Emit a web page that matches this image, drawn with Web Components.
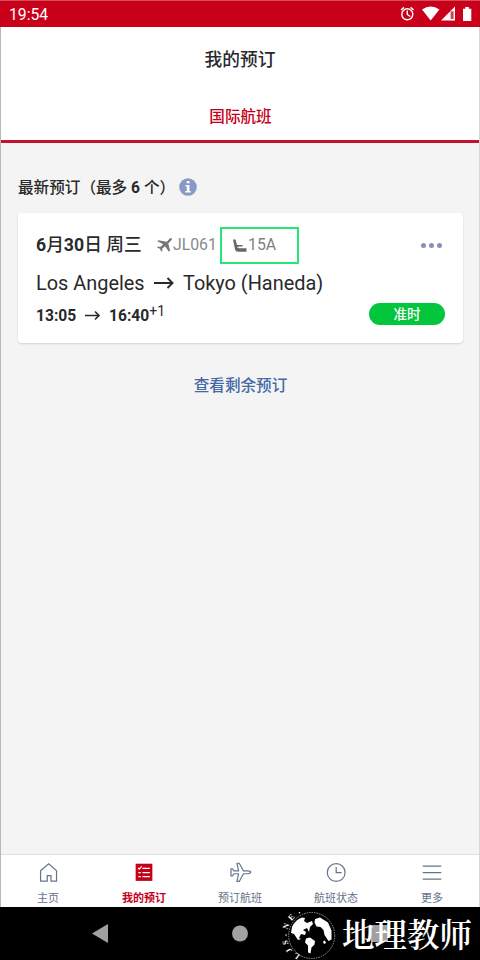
<!DOCTYPE html>
<html lang="zh-CN"><head><meta charset="utf-8"><title>我的预订</title>
<style>html,body{margin:0;padding:0}</style></head><body>
<booking-app></booking-app>
<script>
const define=(name,html)=>{
  const t=document.createElement('template');t.innerHTML=html;
  customElements.define(name,class extends HTMLElement{
    constructor(){super();this.attachShadow({mode:'open'}).append(t.content.cloneNode(true));}
  });
};
define('status-bar',`<style>
:host{display:flex;box-sizing:border-box;height:27px;background:#c90019;border-top:1px solid #d0505e;color:#fff;padding:0 8px 0 9px;align-items:center;justify-content:space-between;font-size:15.700px}
span{line-height:28px;height:26px}svg{display:block}
</style><span>19:54</span>
<svg width="74" height="18" viewBox="398 4.500 74 18"><g fill="none" stroke="#fff" stroke-width="1.4"><circle cx="407.3" cy="13.8" r="5.5"/><path d="M407.3 10v4l3 2M401 9.5l3-2.6M413.6 9.5l-3-2.6"/></g><g fill="#fff"><path d="M422 9q8.7-6 17.4 0L430.7 20z"/><path fill-rule="evenodd" d="M441 20L455 6V20zM450.6 10.8V18.600H453.600V10.8z"/><path d="M450 10h4v10h-4z" opacity=".25"/><path d="M463 8.300h2.300V6.500h3.600v1.800h2.400V20.500H463z"/></g></svg>`);
define('page-header',`<style>
:host{display:flex;flex-direction:column;align-items:center;height:116px;box-sizing:border-box;background:#fff;border-bottom:3px solid #c3122b}
.t{font-size:17.700px;font-weight:500;color:#29292d;height:63px;line-height:66px}.tab{font-size:15.600px;font-weight:500;color:#c3001c;height:50px;line-height:54px;padding-left:1px}
</style><div class="t"><slot name="title"></slot></div><div class="tab"><slot name="tab"></slot></div>`);
define('flight-card',`<style>
:host{display:block;box-sizing:border-box;height:130px;width:445px;background:#fff;border-radius:4px;box-shadow:0 1px 2px #0002;padding:15px 18px 0}
:host{color:#29292b}
.row{display:flex;align-items:center;white-space:pre}.a{height:34px}.date{font-size:17.700px;font-weight:500;width:120px}.date b{font-weight:700}
.flight{display:flex;align-items:center;width:64px;font-size:15.800px;color:#88888b}
.seat{display:flex;align-items:center;box-sizing:border-box;width:79px;height:37px;margin-top:1px;border:2px solid #25e676;padding-left:11px;font-size:15.800px;color:#808083}
.dots{margin-left:auto;display:flex;gap:3px;padding-right:3px}.dots i{width:5px;height:5px;border-radius:50%;background:#8790b5}
.route{height:43px;font-size:19.900px}.time{height:22px;font-size:15.600px;font-weight:700}.badge{margin-left:auto;background:#03c63c;color:#fff;font-size:13.500px;font-weight:500;width:76px;height:22px;line-height:22px;text-align:center;border-radius:11px;position:relative;top:-2px}
sup{font-size:14px;font-weight:400;line-height:1;align-self:flex-start;margin-top:-1px}svg{flex:none}
</style><div class="row a"><span class="date"><b>6</b>月<b>30</b>日 周三</span>
<span class="flight"><svg width="17" height="16" viewBox="-1 0 18 16"><path fill="#777" d="M1.500 3l9 1.500 3-3.300Q15.500 0 16 1.500q0 .8-1 1.700L12 6.300 14 14l-1.500 1L8.500 9.300 5.400 12.200l.4 2-1.200 1-1.500-3.100L0 10.700l1.100-1.200 2.400.6L6.600 7.300 .5 4z"/></svg>JL061</span>
<span class="seat"><svg width="15" height="16" viewBox="0 0 15 16"><path fill="#68686c" d="M0 1.500h2.600L4 7h5.500v1.500H5.200l.7 1.800H13.500v3.500H5q-2.300 0-3-2.300z"/><path d="M4 9.500h9" stroke="#fff" stroke-width=".6"/></svg>15A</span><span class="dots"><i></i><i></i><i></i></span></div>
<div class="row route"><span style="width:118px">Los Angeles</span><svg width="29" height="20" viewBox="0 0 29 20"><path d="M0 9h18M13.500 4l5 5-5 5" fill="none" stroke="#29292b" stroke-width="1.900"/></svg><span>Tokyo (Haneda)</span></div>
<div class="row time"><span style="width:49px">13:05</span><svg width="24" height="16" viewBox="0 0 24 16"><path d="M0 7.500h14M10 3.500l4 4-4 4" fill="none" stroke="#29292b" stroke-width="1.600"/></svg><span>16:40</span><sup>+1</sup><span class="badge">准时</span></div>`);
define('booking-list',`<style>
:host{display:flex;flex-direction:column;align-items:center;box-sizing:border-box;height:711px;background:#f4f4f4;padding:29px 17px 0 18px}
.head{display:flex;align-items:center;align-self:flex-start;height:30px;margin-bottom:11px;font-size:15.600px;font-weight:500;color:#29292b;white-space:pre}.head span{padding-top:2px}.head b{font-weight:700}.head svg{margin-left:4px}
.more{font-size:15.600px;font-weight:500;color:#4568a5;margin-top:31px;line-height:25px}
</style><div class="head"><span>最新预订（最多 <b>6</b> 个）</span><svg width="18" height="18" viewBox="0 0 18 18"><circle cx="9" cy="9" r="8.800" fill="#879ac4"/><path fill="#fff" d="M7.800 3h2.700v2.300H7.800zM6.500 7h4v6h1.200v1.500H6.300V13h1.500V8.500H6.500z"/></svg></div><flight-card></flight-card><div class="more">查看剩余预订</div>`);
define('nav-item',`<style>
:host{display:flex;flex-direction:column;align-items:center;flex:1;color:#657187;font-size:11px;padding-top:5px}:host([active]){color:#c3001c;font-weight:700}.l{line-height:17px;margin-top:4px}
</style><slot name="icon"></slot><span class="l"><slot></slot></span>`);
define('bottom-nav',`<style>:host{display:flex;height:53px;box-sizing:border-box;background:#fff;border-top:1px solid #dedede}svg{width:28px;height:28px;display:block;fill:none;stroke:#66758d;stroke-width:1.3}</style>
<nav-item><svg slot="icon" viewBox="0 0 28 28"><path d="M6 11.500L14.700 4l8.500 7.500v11.300H17.200v-6h-4v6H6z"/></svg>主页</nav-item>
<nav-item active><svg slot="icon" viewBox="0 0 28 28"><path d="M5 4h18v18.500H5z" fill="#c30019" stroke="none"/><path stroke="#fff" d="M12.300 9h8M12.300 13.500h8M12.300 18h8M7.500 8.500l1.400 1.400 2.500-3M8 13.500h2.500M8 18h2.500"/></svg>我的预订</nav-item>
<nav-item><svg slot="icon" viewBox="0 0 28 28"><path stroke-linejoin="round" d="M4.300 9.500h1.500l1.700 2.300h5L10.700 3.500h2.500l4.500 8.300h4.500q3.300 0 3.300 1.500t-3.300 1.500h-4.500l-4.500 8.300h-2.500l1.800-8.300h-5L5.800 17.100H4.300z"/></svg>预订航班</nav-item>
<nav-item><svg slot="icon" viewBox="0 0 28 28"><circle cx="14.200" cy="13.500" r="9.600"/><path d="M14.200 7.500v6H20"/></svg>航班状态</nav-item>
<nav-item><svg slot="icon" viewBox="0 0 28 28"><path d="M4 6.500h20M4 13.500h20M4 20.500h20"/></svg>更多</nav-item>`);
define('system-nav',`<style>
:host{display:block;position:relative;height:53px;background:#000;overflow:hidden}.keys{display:block}.mark{position:absolute;left:278px;top:0;display:block}
.name{position:absolute;left:342px;top:7px;color:#fff;white-space:nowrap;font:600 32.500px/38px "AR PL UKai CN","Noto Serif CJK SC","Noto Sans CJK SC",serif}
</style><svg class="keys" width="480" height="53" viewBox="0 0 480 53"><path d="M92 26.500L108 17v19z" fill="#a1a1a1"/><circle cx="240" cy="26.500" r="8" fill="#a1a1a1"/><path fill="#a1a1a1" d="M371 18h17v17h-17z"/></svg>
<svg class="mark" width="62" height="53" viewBox="278 907 62 53"><circle cx="311.700" cy="935.500" r="23" fill="none" stroke="#bbb" stroke-width=".8" stroke-dasharray="1.500 1"/><g fill="#fff"><path d="M292 927q3-7 10-9.500l3 .5-1 3 3 2 5-2 1 3-3 3-1 5-2-4-4 2 3 2-1 3-4-1-2 4 2 1-3 1-4-6-3-1zM315 919l5-1.500 8 5 3.500 8v9l-3 1.500-4-6-1-5-3-3-4-.500-2-4zM306 938.500l4-1 5 3.500-.500 3.500-3 3-1 6-2.500-1v-7l-3-3zM323 941.500l2-1 1 2.500-2 1z"/></g><g fill="#fff" font-family="Liberation Serif" font-weight="700" font-size="8" text-anchor="middle"><text transform="translate(311.500 934.500) rotate(-145)" y="-23.500">L</text><text transform="translate(311.500 935.500) rotate(-124)" y="-24.500">J</text><text transform="translate(311.500 935.500) rotate(-105)" y="-24.500">S</text><text transform="translate(311.500 935.500) rotate(-89)" y="-25">.</text><text transform="translate(311.500 935.500) rotate(-70)" y="-24.500">N</text><text transform="translate(311.500 935.500) rotate(-48)" y="-24.500">E</text><circle cx="299.500" cy="912.800" r=".8"/></g></svg><span class="name">地理教师</span>`);
define('booking-app',`<style>
:host{display:flex;flex-direction:column;position:relative;width:480px;height:960px;overflow:hidden;font-family:Roboto,"Noto Sans CJK SC",sans-serif;line-height:1.3}
:host::after{content:"";position:absolute;inset:27px 0 53px 0;border-left:1px solid #b8b8b8;border-right:1px solid #d7d7d7;pointer-events:none}
</style><status-bar></status-bar><page-header><span slot="title">我的预订</span><span slot="tab">国际航班</span></page-header><booking-list></booking-list><bottom-nav></bottom-nav><system-nav></system-nav>`);
</script></body></html>
